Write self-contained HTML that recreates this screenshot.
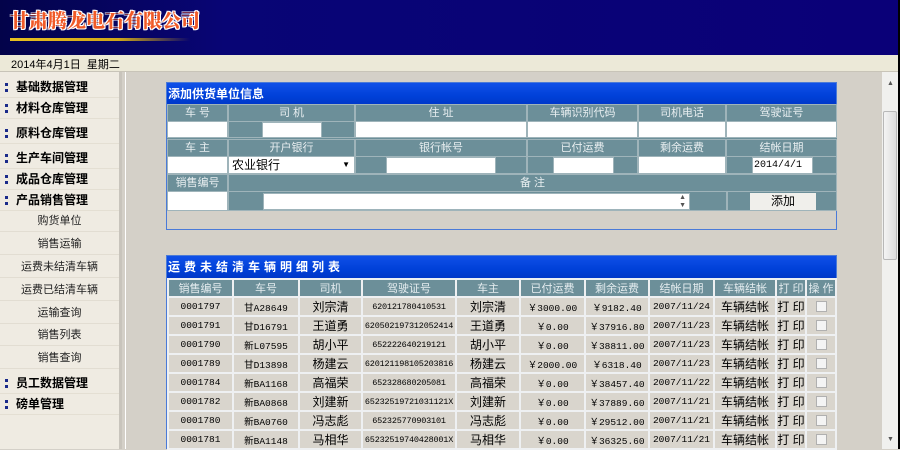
<!DOCTYPE html>
<html><head><meta charset="utf-8"><style>
*{margin:0;padding:0;box-sizing:border-box}
body{width:900px;height:449px;overflow:hidden;position:relative;background:#d4d0c8;font-family:"Liberation Sans","Noto Sans CJK SC",sans-serif;font-size:12px;color:#000}
.a{position:absolute}
#hdr{left:0;top:0;width:900px;height:55px;background:linear-gradient(90deg,#03034a 0%,#080575 25%,#0a0078 100%);border-right:2px solid #000}
#title{left:10px;top:6px;font-size:19px;font-weight:900;color:#f05a28;letter-spacing:0;font-family:"Noto Serif CJK SC","Noto Sans CJK SC",serif;text-shadow:1px 0 #fff,-1px 0 #fff,0 1px #fff,0 -1px #fff,1px 1px #fff,-1px -1px #fff,1px -1px #fff,-1px 1px #fff}
#gl{left:10px;top:38px;width:180px;height:3px;background:linear-gradient(90deg,#e8c020 0%,#d0a818 60%,rgba(20,10,100,0) 100%)}
#date{left:0;top:55px;width:900px;height:17px;background:#ece9d8;border-bottom:1px solid #c8c4b8;padding:1px 0 0 11px;font-size:11px}
#side{left:0;top:72px;width:122px;height:377px;background:#efebe2;border-right:3px solid #c8c4bc}
.m{position:absolute;left:0;width:119px;font-weight:bold;font-size:12px;padding-left:16px;height:21px;line-height:21px;border-bottom:1px solid #e4dfd3}
.m:before{content:"";position:absolute;left:5px;top:6px;width:3px;height:9px;border-left:3px dotted #1a2a8a}
.s{position:absolute;left:0;width:119px;text-align:center;font-size:11px;color:#222;height:22px;line-height:22px;border-bottom:1px solid #e2ddd2}
#main{left:125px;top:72px;width:757px;height:377px;background:#d4d0c8;border-left:1px solid #fff}
#sb{left:882px;top:72px;width:16px;height:377px;background:#f0f0ee}
#thumb{left:883px;top:111px;width:14px;height:149px;background:linear-gradient(90deg,#f4f4f4,#dcdcdc);border:1px solid #b8b8b8;border-radius:2px}
#rb{left:898px;top:55px;width:2px;height:394px;background:#000}
.panel{position:absolute;left:166px;width:671px;border:1px solid #4a7ad8;background:#d4d0c8}
.tb{height:22px;background:linear-gradient(#1050e8,#0040d8 60%,#0038c8);color:#fff;font-weight:bold;font-size:12px;line-height:22px;padding-left:1px}
.c{position:absolute;background:#6c8f99;color:#e8eef0;text-align:center;font-size:11px;line-height:16px;border:1px solid #9fb4ba}
.w{position:absolute;background:#fff;border:1px solid #9fb4ba}
table{border-collapse:separate;border-spacing:2px;background:#eef0f2;width:670px;font-size:11px;table-layout:fixed}
th{background:#6c8f99;color:#e4ecef;font-weight:normal;height:15px;font-size:11px;padding:0;overflow:hidden;white-space:nowrap}
td{background:#d9d5cd;height:17px;text-align:center;font-family:"Liberation Mono","Noto Sans CJK SC",monospace;font-size:9.5px;padding:0;overflow:hidden;white-space:nowrap}
td.z{font-family:"Liberation Sans","Noto Sans CJK SC",sans-serif;font-size:12px}
td.n{font-size:8.5px;letter-spacing:-0.2px}
.cb{display:inline-block;width:11px;height:11px;border:1px solid #b0b0b0;background:#f4f4f4;vertical-align:middle}
</style></head><body>
<div id="hdr" class="a"></div>
<div id="title" class="a">甘肃腾龙电石有限公司</div>
<div id="gl" class="a"></div>
<div id="date" class="a">2014年4月1日&nbsp; 星期二</div>
<div id="side" class="a">
<div class="m" style="top:5px">基础数据管理</div>
<div class="m" style="top:26px">材料仓库管理</div>
<div class="m" style="top:51px">原料仓库管理</div>
<div class="m" style="top:76px">生产车间管理</div>
<div class="m" style="top:97px">成品仓库管理</div>
<div class="m" style="top:118px">产品销售管理</div>
<div class="s" style="top:138px">购货单位</div>
<div class="s" style="top:161px">销售运输</div>
<div class="s" style="top:184px">运费未结清车辆</div>
<div class="s" style="top:207px">运费已结清车辆</div>
<div class="s" style="top:230px">运输查询</div>
<div class="s" style="top:252px">销售列表</div>
<div class="s" style="top:275px">销售查询</div>
<div class="m" style="top:301px">员工数据管理</div>
<div class="m" style="top:322px">磅单管理</div>
</div>
<div id="main" class="a"></div>
<div id="sb" class="a"></div>
<div id="thumb" class="a"></div>
<div class="a" style="left:887px;top:80px;font-size:7px;color:#555">▲</div>
<div class="a" style="left:887px;top:436px;font-size:7px;color:#555">▼</div>
<div id="rb" class="a"></div>

<div class="panel" style="top:82px;height:148px">
<div class="tb">添加供货单位信息</div>
</div>
<div class="a" style="left:167px;top:104px;width:670px;height:107px;background:#6c8f99"></div>
<div class="c" style="left:167px;top:104px;width:61px">车 号</div>
<div class="c" style="left:228px;top:104px;width:127px">司 机</div>
<div class="c" style="left:355px;top:104px;width:172px">住 址</div>
<div class="c" style="left:527px;top:104px;width:111px">车辆识别代码</div>
<div class="c" style="left:638px;top:104px;width:88px">司机电话</div>
<div class="c" style="left:726px;top:104px;width:111px">驾驶证号</div>
<div class="w" style="left:167px;top:121px;width:61px;height:17px"></div>
<div class="c" style="left:228px;top:121px;width:127px;height:17px"></div>
<div class="w" style="left:262px;top:122px;width:60px;height:16px"></div>
<div class="w" style="left:355px;top:121px;width:172px;height:17px"></div>
<div class="w" style="left:527px;top:121px;width:111px;height:17px"></div>
<div class="w" style="left:638px;top:121px;width:88px;height:17px"></div>
<div class="w" style="left:726px;top:121px;width:111px;height:17px"></div>

<div class="c" style="left:167px;top:139px;width:61px">车 主</div>
<div class="c" style="left:228px;top:139px;width:127px">开户银行</div>
<div class="c" style="left:355px;top:139px;width:172px">银行帐号</div>
<div class="c" style="left:527px;top:139px;width:111px">已付运费</div>
<div class="c" style="left:638px;top:139px;width:88px">剩余运费</div>
<div class="c" style="left:726px;top:139px;width:111px">结帐日期</div>
<div class="w" style="left:167px;top:156px;width:61px;height:18px"></div>
<div class="w" style="left:228px;top:156px;width:127px;height:18px;font-size:12px;line-height:16px;padding-left:3px">农业银行<span style="position:absolute;right:4px;top:0;font-size:8px">▼</span></div>
<div class="c" style="left:355px;top:156px;width:172px;height:18px"></div>
<div class="w" style="left:386px;top:157px;width:110px;height:17px"></div>
<div class="c" style="left:527px;top:156px;width:111px;height:18px"></div>
<div class="w" style="left:553px;top:157px;width:61px;height:17px"></div>
<div class="w" style="left:638px;top:156px;width:88px;height:18px"></div>
<div class="c" style="left:726px;top:156px;width:111px;height:18px"></div>
<div class="w" style="left:752px;top:157px;width:61px;height:17px;font-family:'Liberation Mono',monospace;font-size:10px;line-height:15px;padding-left:1px">2014/4/1</div>

<div class="c" style="left:167px;top:174px;width:61px">销售编号</div>
<div class="c" style="left:228px;top:174px;width:609px;text-align:center">备 注</div>
<div class="w" style="left:167px;top:191px;width:61px;height:20px"></div>
<div class="c" style="left:228px;top:191px;width:499px;height:20px"></div>
<div class="w" style="left:263px;top:193px;width:427px;height:17px"><span style="position:absolute;right:3px;top:0;font-size:7px;line-height:8px;color:#555">▲<br>▼</span></div>
<div class="c" style="left:727px;top:191px;width:110px;height:20px"></div>
<div class="a" style="left:750px;top:193px;width:66px;height:17px;background:#f0efeb;text-align:center;font-size:12px;line-height:17px">添加</div>

<div class="panel" style="top:255px;height:194px;border-bottom:none">
<div class="tb" style="letter-spacing:4px">运费未结清车辆明细列表</div>
<table>
<colgroup><col style="width:63px"><col style="width:64px"><col style="width:61px"><col style="width:92px"><col style="width:62px"><col style="width:63px"><col style="width:62px"><col style="width:63px"><col style="width:60px"><col style="width:28px"><col style="width:28px"></colgroup>
<tr><th>销售编号</th><th>车号</th><th>司机</th><th>驾驶证号</th><th>车主</th><th>已付运费</th><th>剩余运费</th><th>结帐日期</th><th>车辆结帐</th><th>打 印</th><th>操 作</th></tr>
<tr><td>0001797</td><td>甘A28649</td><td class="z">刘宗清</td><td class="n">620121780410531</td><td class="z">刘宗清</td><td>￥3000.00</td><td>￥9182.40</td><td>2007/11/24</td><td class="z">车辆结帐</td><td class="z">打 印</td><td><span class="cb"></span></td></tr>
<tr><td>0001791</td><td>甘D16791</td><td class="z">王道勇</td><td class="n">620502197312052414</td><td class="z">王道勇</td><td>￥0.00</td><td>￥37916.80</td><td>2007/11/23</td><td class="z">车辆结帐</td><td class="z">打 印</td><td><span class="cb"></span></td></tr>
<tr><td>0001790</td><td>新L07595</td><td class="z">胡小平</td><td class="n">652222640219121</td><td class="z">胡小平</td><td>￥0.00</td><td>￥38811.00</td><td>2007/11/23</td><td class="z">车辆结帐</td><td class="z">打 印</td><td><span class="cb"></span></td></tr>
<tr><td>0001789</td><td>甘D13898</td><td class="z">杨建云</td><td class="n">620121198105203816</td><td class="z">杨建云</td><td>￥2000.00</td><td>￥6318.40</td><td>2007/11/23</td><td class="z">车辆结帐</td><td class="z">打 印</td><td><span class="cb"></span></td></tr>
<tr><td>0001784</td><td>新BA1168</td><td class="z">高福荣</td><td class="n">652328680205081</td><td class="z">高福荣</td><td>￥0.00</td><td>￥38457.40</td><td>2007/11/22</td><td class="z">车辆结帐</td><td class="z">打 印</td><td><span class="cb"></span></td></tr>
<tr><td>0001782</td><td>新BA0868</td><td class="z">刘建新</td><td class="n">65232519721031121X</td><td class="z">刘建新</td><td>￥0.00</td><td>￥37889.60</td><td>2007/11/21</td><td class="z">车辆结帐</td><td class="z">打 印</td><td><span class="cb"></span></td></tr>
<tr><td>0001780</td><td>新BA0760</td><td class="z">冯志彪</td><td class="n">652325770903101</td><td class="z">冯志彪</td><td>￥0.00</td><td>￥29512.00</td><td>2007/11/21</td><td class="z">车辆结帐</td><td class="z">打 印</td><td><span class="cb"></span></td></tr>
<tr><td>0001781</td><td>新BA1148</td><td class="z">马相华</td><td class="n">65232519740428001X</td><td class="z">马相华</td><td>￥0.00</td><td>￥36325.60</td><td>2007/11/21</td><td class="z">车辆结帐</td><td class="z">打 印</td><td><span class="cb"></span></td></tr>
</table>
</div>
</body></html>
